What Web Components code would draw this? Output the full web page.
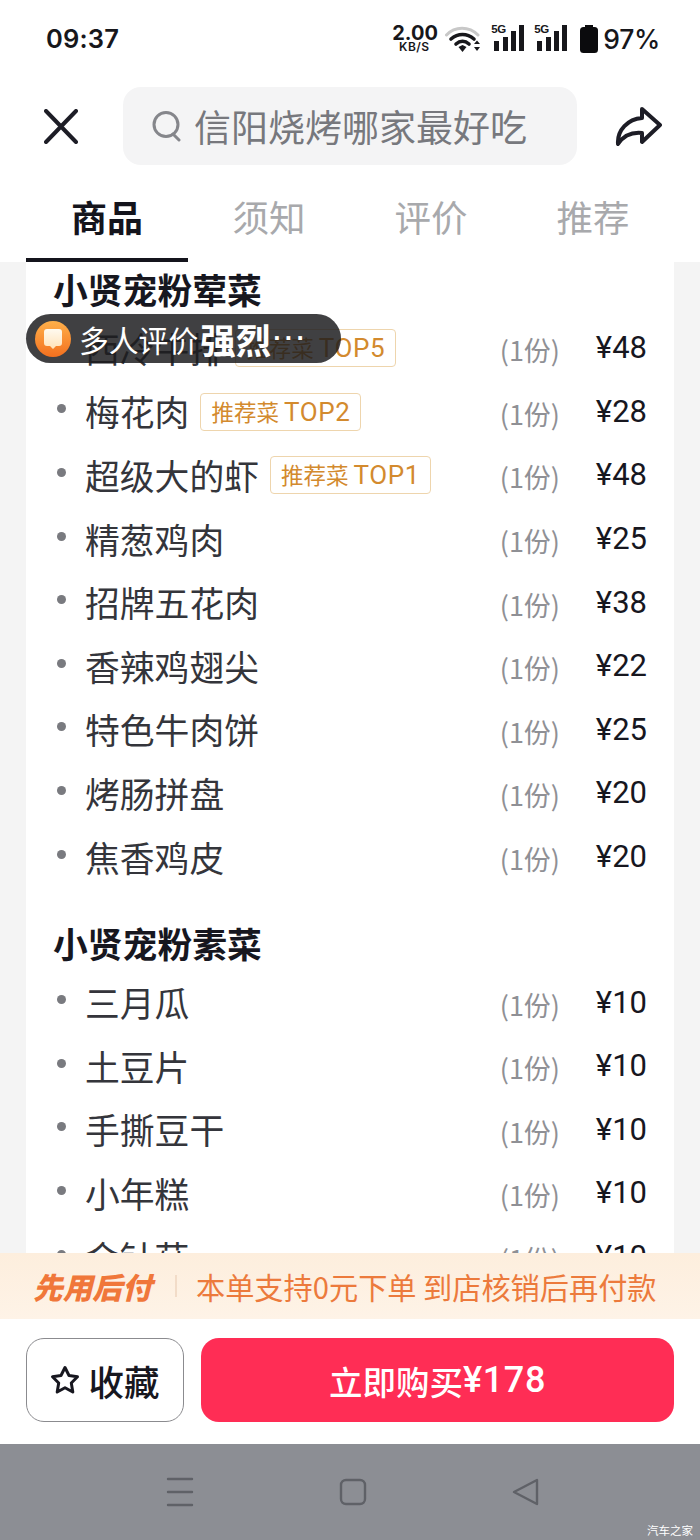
<!DOCTYPE html>
<html lang="zh">
<head>
<meta charset="utf-8">
<title>商品</title>
<style>
  html, body { margin: 0; height: 1540px; overflow: hidden; }
  body {
    position: relative;
    display: flex;
    flex-direction: column;
    background: #fff;
    font-family: "Noto Sans CJK SC", "Noto Sans", sans-serif;
  }
  dish-list { flex: 1; min-height: 0; }
</style>
</head>
<body>
  <status-bar></status-bar>
  <top-nav>信阳烧烤哪家最好吃</top-nav>
  <tab-bar></tab-bar>
  <dish-list>
    <dish-section title="小贤宠粉荤菜">
      <dish-row price="48" tag="推荐菜 TOP5">西冷牛排</dish-row>
      <dish-row price="28" tag="推荐菜 TOP2">梅花肉</dish-row>
      <dish-row price="48" tag="推荐菜 TOP1">超级大的虾</dish-row>
      <dish-row price="25">精葱鸡肉</dish-row>
      <dish-row price="38">招牌五花肉</dish-row>
      <dish-row price="22">香辣鸡翅尖</dish-row>
      <dish-row price="25">特色牛肉饼</dish-row>
      <dish-row price="20">烤肠拼盘</dish-row>
      <dish-row price="20">焦香鸡皮</dish-row>
    </dish-section>
    <dish-section title="小贤宠粉素菜">
      <dish-row price="10">三月瓜</dish-row>
      <dish-row price="10">土豆片</dish-row>
      <dish-row price="10">手撕豆干</dish-row>
      <dish-row price="10">小年糕</dish-row>
      <dish-row price="10">金针菇</dish-row>
    </dish-section>
  </dish-list>
  <promo-bar></promo-bar>
  <action-bar></action-bar>
  <nav-bar></nav-bar>
  <review-toast></review-toast>

<script>
'use strict';

// small helper, every element is just a template in an open shadow root
function shadow(el, html) {
  el.attachShadow({mode: 'open'}).innerHTML = html;
}

class StatusBar extends HTMLElement {
  constructor() {
    super();
    const signal = `
      <div class="sig">
        <span class="g">5G</span>
        <svg width="35" height="27" viewBox="0 0 35 27" fill="#17171b">
          <rect x="4" y="16" width="5" height="10"/>
          <rect x="13" y="12" width="5" height="14"/>
          <rect x="21" y="6" width="5" height="20"/>
          <rect x="29" y="0" width="5" height="26"/>
        </svg>
      </div>`;
    shadow(this, `
    <style>
      :host {
        display: flex;
        align-items: center;
        height: 77px;
        padding: 0 40px 0 46px;
        color: #17171b;
        font-family: Inter, Roboto, sans-serif;
        box-sizing: border-box;
      }
      .time { font-size: 25.5px; font-weight: 600; letter-spacing: .2px; flex: 1; }
      .right { display: flex; align-items: center; }
      .speed { width: 44px; text-align: center; line-height: 1; margin-right: 9px; }
      .speed b { display: block; font-size: 20px; font-weight: 700; line-height: 16px; }
      .speed span { display: block; font-size: 12px; font-weight: 600; line-height: 12px; letter-spacing: .4px; }
      .sig { position: relative; width: 35px; height: 27px; margin-left: 8px; }
      .sig svg { display: block; }
      .g {
        position: absolute; left: 1px; top: -2px;
        font: 700 11.5px/12px "Liberation Sans", sans-serif;
        letter-spacing: -.5px;
      }
      .bat { display: block; margin-left: 12px; }
      .pct { font-size: 26.5px; font-weight: 500; margin-left: 5px; letter-spacing: -.3px; }
    </style>
    <div class="time">09:37</div>
    <div class="right">
      <div class="speed"><b>2.00</b><span>KB/S</span></div>
      <svg width="37" height="28" viewBox="0 0 37 28" fill="none" stroke-linecap="round">
        <path d="M1.5 10 C10 1 24 1 33 10" stroke="#c8c8c8" stroke-width="3"/>
        <path d="M6 14 C13 8 22 8 29 14" stroke="#17171b" stroke-width="3.6"/>
        <path d="M11 19 C15 15.500 20 15.500 24 19" stroke="#17171b" stroke-width="3.6"/>
        <path d="M13.500 22 L17.500 20 L21.500 22 L17.500 27 Z" fill="#17171b"/>
        <path d="M29 19 L32 15.500 L35 19 Z M29 22 L32 26 L35 22 Z" fill="#17171b"/>
      </svg>
      ${signal}${signal}
      <svg class="bat" width="18" height="28" viewBox="0 0 18 28" fill="#0b0b0d">
        <rect x="5" y="0" width="8" height="3"/>
        <rect x="0" y="2" width="18" height="26" rx="3.500"/>
      </svg>
      <div class="pct">97%</div>
    </div>`);
  }
}

class TopNav extends HTMLElement {
  constructor() {
    super();
    shadow(this, `
    <style>
      :host {
        display: flex;
        align-items: center;
        height: 98px;
        padding: 0 38px 0 44px;
        box-sizing: border-box;
      }
      .close { display: block; flex: none; margin-right: 45px; }
      .search {
        flex: 1;
        height: 78px;
        display: flex;
        align-items: center;
        padding-left: 29px;
        background: #f4f4f5;
        border-radius: 18px;
        color: #77787d;
        font-size: 37px;
        white-space: nowrap;
      }
      .search svg { margin-right: 12px; flex: none; }
      .share { display: block; flex: none; margin-left: 38px; }
    </style>
    <svg class="close" width="34" height="35" viewBox="0 0 34 35" fill="none" stroke="#1d1d26" stroke-width="4" stroke-linecap="round">
      <path d="M2 2 L32 33 M32 2 L2 33"/>
    </svg>
    <div class="search">
      <svg width="30" height="32" viewBox="0 0 30 32" fill="none" stroke="#85868b" stroke-width="3" stroke-linecap="round">
        <circle cx="14" cy="14.500" r="12"/>
        <path d="M21 24 L27 30"/>
      </svg>
      <slot></slot>
    </div>
    <svg class="share" width="47" height="40" viewBox="0 0 47 40" fill="none" stroke="#1d1d26" stroke-width="4" stroke-linejoin="round" stroke-linecap="round">
      <path d="M27 3 L45 19 L27 36 V27 C17 26 9 29 3 38 C2 24 13 13 27 12 Z"/>
    </svg>`);
  }
}

class TabBar extends HTMLElement {
  constructor() {
    super();
    shadow(this, `
    <style>
      :host {
        display: grid;
        grid-template-columns: repeat(4, 162px);
        padding: 0 26px;
        height: 87px;
        box-sizing: border-box;
      }
      div {
        text-align: center;
        font-size: 36.500px;
        line-height: 83px;
        color: #a8a9ac;
      }
      .on {
        color: #14141c;
        font-weight: 700;
        font-size: 36px;
        height: 87px;
        box-sizing: border-box;
        border-bottom: 4px solid #14141c;
      }
    </style>
    <div class="on">商品</div><div>须知</div><div>评价</div><div>推荐</div>`);
  }
}

class DishList extends HTMLElement {
  constructor() {
    super();
    shadow(this, `
    <style>
      :host { display: block; background: #f4f4f4; padding: 0 26px; overflow: hidden; }
      .card { background: #fff; padding: 0 27px 0 27px; }
    </style>
    <div class="card"><slot></slot></div>`);
  }
}

class DishSection extends HTMLElement {
  constructor() {
    super();
    shadow(this, `
    <style>
      :host { display: block; margin-bottom: 26px; }
      h3 {
        margin: 0;
        height: 56px;
        font-size: 34.800px;
        line-height: 54px;
        font-weight: 700;
        color: #17171f;
      }
    </style>
    <h3></h3>
    <slot></slot>`);
    this.shadowRoot.querySelector('h3').textContent = this.getAttribute('title');
  }
}

class DishRow extends HTMLElement {
  constructor() {
    super();
    const tag = this.getAttribute('tag');
    shadow(this, `
    <style>
      :host {
        display: flex;
        align-items: center;
        height: 63.600px;
      }
      .dot {
        flex: none;
        width: 9px;
        height: 9px;
        margin: -9px 19px 0 4px;
        border-radius: 50%;
        background: #797a7f;
      }
      .name {
        margin-top: -4px;
        font-size: 34.800px;
        color: #34353b;
        white-space: nowrap;
        line-height: 64px;
      }
      .tag {
        margin: -3px 0 0 11px;
        height: 38px;
        box-sizing: border-box;
        padding: 0 10px;
        border: 1px solid #eed5ad;
        border-radius: 4px;
        color: #d38a2e;
        font-size: 22.500px;
        line-height: 34px;
        white-space: nowrap;
      }
      .tag span { font-family: Roboto, sans-serif; font-size: 26px; letter-spacing: .6px; }
      .qty { margin-left: auto; font-size: 27px; color: #8f9095; white-space: nowrap; }
      .price {
        flex: none;
        width: 87px;
        margin-top: -4px;
        text-align: right;
        font: 400 31px Roboto, sans-serif;
        color: #17171f;
      }
    </style>
    <span class="dot"></span>
    <span class="name"><slot></slot></span>
    ${tag ? `<span class="tag">${tag.replace(/(TOP\d)/, '<span>$1</span>')}</span>` : ''}
    <span class="qty">(1份)</span>
    <span class="price">¥${this.getAttribute('price')}</span>`);
  }
}

class PromoBar extends HTMLElement {
  constructor() {
    super();
    shadow(this, `
    <style>
      :host {
        display: flex;
        align-items: center;
        height: 66px;
        padding-left: 33px;
        box-sizing: border-box;
        background: linear-gradient(#fdeedd, #fef3e7);
        color: #ec7a3c;
        white-space: nowrap;
      }
      b { font-size: 29.700px; font-style: italic; font-weight: 900; color: #f0773a; width: 121px; }
      i { width: 2px; height: 22px; background: #f2dcc8; margin: 0 19px 0 21px; }
      span { font-size: 29.200px; }
    </style>
    <b>先用后付</b><i></i><span>本单支持0元下单 到店核销后再付款</span>`);
  }
}

class ActionBar extends HTMLElement {
  constructor() {
    super();
    shadow(this, `
    <style>
      :host {
        display: flex;
        gap: 17px;
        height: 125px;
        padding: 19px 26px 0;
        box-sizing: border-box;
        background: #fff;
      }
      .fav {
        flex: none;
        width: 158px;
        height: 84px;
        box-sizing: border-box;
        display: flex;
        align-items: center;
        justify-content: center;
        gap: 8px;
        border: 1px solid #8b8b8f;
        border-radius: 18px;
        font-size: 35.500px;
        font-weight: 500;
        color: #17171f;
      }
      .fav svg { flex: none; }
      .buy {
        flex: 1;
        height: 84px;
        display: flex;
        align-items: center;
        justify-content: center;
        border-radius: 18px;
        background: #ff2d55;
        color: #fff;
        font-size: 33.500px;
        font-weight: 500;
      }
      .buy span { font-family: Roboto, sans-serif; font-size: 36px; font-weight: 500; letter-spacing: .6px; }
    </style>
    <div class="fav">
      <svg width="30" height="30" viewBox="0 0 30 30" fill="none" stroke="#17171f" stroke-width="3" stroke-linejoin="round">
        <path d="M15 2.500 L19 10.500 L27.500 11.800 L21.300 18 L22.800 27 L15 22.700 L7.200 27 L8.700 18 L2.500 11.800 L11 10.500 Z"/>
      </svg>
      <span>收藏</span>
    </div>
    <div class="buy">立即购买<span>¥178</span></div>`);
  }
}

class NavBar extends HTMLElement {
  constructor() {
    super();
    shadow(this, `
    <style>
      :host {
        position: relative;
        display: flex;
        justify-content: center;
        align-items: center;
        gap: 145px;
        height: 96px;
        padding-left: 6px;
        background: #8c8e94;
        box-sizing: border-box;
      }
      svg { display: block; }
      .mark {
        position: absolute;
        right: 7px;
        bottom: 2px;
        color: #fff;
        font-size: 11.500px;
        line-height: 16px;
      }
    </style>
    <svg width="28" height="30" viewBox="0 0 28 30" fill="none" stroke="#5f6167" stroke-width="2.400" stroke-linecap="round">
      <path d="M2 2 H26 M2 15 H26 M2 28 H26"/>
    </svg>
    <svg width="28" height="28" viewBox="0 0 28 28" fill="none" stroke="#5f6167" stroke-width="2.400">
      <rect x="2" y="2" width="24" height="24" rx="5"/>
    </svg>
    <svg width="28" height="28" viewBox="0 0 28 28" fill="none" stroke="#5f6167" stroke-width="2.400" stroke-linejoin="round">
      <path d="M25 2 V26 L2 14 Z"/>
    </svg>
    <span class="mark">汽车之家</span>`);
  }
}

class ReviewToast extends HTMLElement {
  constructor() {
    super();
    shadow(this, `
    <style>
      :host {
        position: absolute;
        left: 26px;
        top: 314px;
        width: 315px;
        height: 49px;
        display: flex;
        align-items: center;
        box-sizing: border-box;
        padding-left: 9px;
        border-radius: 25px;
        background: rgba(28, 28, 30, .84);
        color: #fff;
        white-space: nowrap;
      }
      svg { flex: none; margin-right: 8px; }
      span { font-size: 29.800px; }
      b { font-size: 35.500px; font-weight: 700; margin-left: 2px; }
      em { font: 700 26px "Liberation Sans", sans-serif; letter-spacing: 3px; margin-left: 2px; font-style: normal; }
    </style>
    <svg width="36" height="36" viewBox="0 0 36 36">
      <defs>
        <linearGradient id="g" x1="0" y1="0" x2="0" y2="1">
          <stop offset="0" stop-color="#ffb04a"/>
          <stop offset="1" stop-color="#f3701f"/>
        </linearGradient>
        <linearGradient id="w" x1="0" y1="0" x2="0" y2="1">
          <stop offset="0" stop-color="#fffaf0"/>
          <stop offset="1" stop-color="#ffe2b8"/>
        </linearGradient>
      </defs>
      <circle cx="18" cy="18" r="18" fill="url(#g)"/>
      <path d="M12 8 H24 Q27 8 27 11 V22 Q27 25 24 25 H21 L18 28 L15 25 H12 Q9 25 9 22 V11 Q9 8 12 8 Z" fill="url(#w)"/>
    </svg>
    <span>多人评价</span><b>强烈</b><em>···</em>`);
  }
}

customElements.define('status-bar', StatusBar);
customElements.define('top-nav', TopNav);
customElements.define('tab-bar', TabBar);
customElements.define('dish-list', DishList);
customElements.define('dish-section', DishSection);
customElements.define('dish-row', DishRow);
customElements.define('promo-bar', PromoBar);
customElements.define('action-bar', ActionBar);
customElements.define('nav-bar', NavBar);
customElements.define('review-toast', ReviewToast);
</script>
</body>
</html>
